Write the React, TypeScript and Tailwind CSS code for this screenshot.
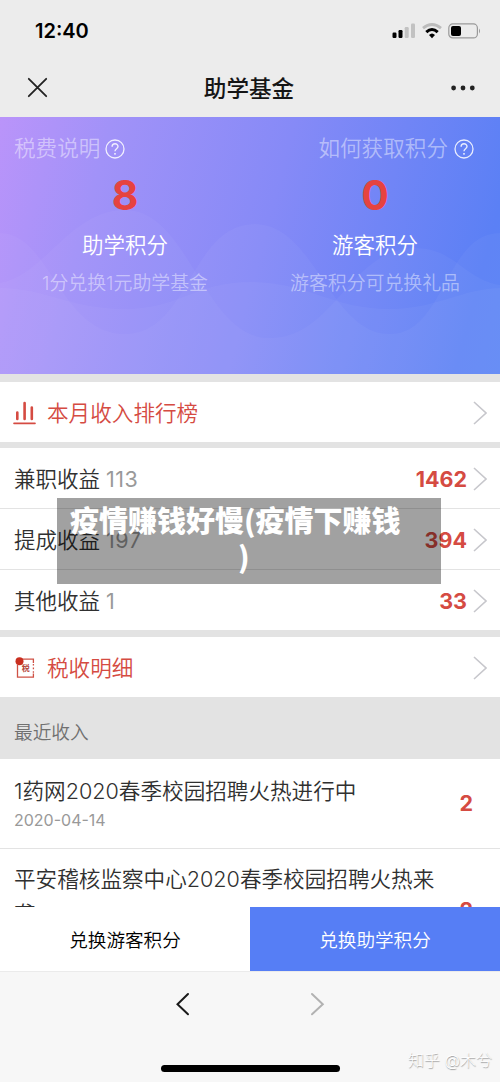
import type { ReactNode } from "react"

const incomes = [
  { label: "兼职收益", count: 113, total: 1462 },
  { label: "提成收益", count: 197, total: 394 },
  { label: "其他收益", count: 1, total: 33 },
]

function Chevron() {
  return (
    <svg className="w-[14px] h-6 shrink-0" viewBox="0 0 14 24" fill="none" stroke="#c7c7cc" strokeWidth="1.6">
      <path d="M1 1 L13 12 L1 23" />
    </svg>
  )
}

function HelpIcon() {
  return (
    <svg className="w-5 h-5 mt-[2px]" viewBox="0 0 20 20" fill="none" stroke="#fff" strokeOpacity="0.85">
      <circle cx="10" cy="10" r="9" strokeWidth="1.3" />
      <path d="M7.1 7.8 C7.1 3.8 13 3.9 13 7.6 C13 9.7 10 9.9 10 12.3" strokeWidth="1.4" />
      <circle cx="10" cy="14.8" r="0.9" fill="#fff" stroke="none" />
    </svg>
  )
}

function StatusBar() {
  return (
    <div className="h-[60px] flex items-center justify-between pl-[35px] pr-[19px]">
      <span className="text-[20px] leading-6 font-semibold text-black mt-0.5">12:40</span>
      <div className="flex items-center gap-[6px] mt-[1px]">
        <svg className="w-6 h-4" viewBox="0 0 24 16">
          <rect x="0.5" y="9.5" width="4" height="5.5" rx="1.2" />
          <rect x="6.5" y="7" width="4" height="8" rx="1.2" />
          <rect x="12.7" y="4" width="4" height="11" rx="1.2" fill="#c2c2c2" />
          <rect x="19" y="0.5" width="4" height="14.5" rx="1.2" fill="#c2c2c2" />
        </svg>
        <svg className="w-5 h-4" viewBox="0 0 20 16" fill="none">
          <path d="M1 5.2 Q10 -2.2 19 5.2" stroke="#bcbcbc" strokeWidth="2.8" />
          <path d="M4.3 9.2 Q10 3.8 15.7 9.2" stroke="#000" strokeWidth="3" />
          <path d="M7 12 Q10 9 13 12 L10 15.2 Z" fill="#000" />
        </svg>
        <svg className="w-[33px] h-4" viewBox="0 0 33 16" fill="none">
          <rect x="0.8" y="0.9" width="28.6" height="14" rx="4" stroke="#999" strokeWidth="1.2" />
          <rect x="3" y="3" width="10" height="10" rx="2" fill="#000" />
          <path d="M31 5.5 Q33 8 31 10.5 Z" fill="#999" />
        </svg>
      </div>
    </div>
  )
}

function NavBar() {
  return (
    <div className="h-[57px] flex items-center justify-between pl-[27px] pr-[25px]">
      <svg className="w-[21px] h-[21px] -mt-0.5" viewBox="0 0 21 21" stroke="#222" strokeWidth="1.8" strokeLinecap="round">
        <path d="M1.8 1.8 L19.2 19.2 M19.2 1.8 L1.8 19.2" />
      </svg>
      <h1 className="text-[22.6px] leading-7 font-medium text-[#151515] -ml-[1px]">助学基金</h1>
      <svg className="w-6 h-[6px] -mt-0.5" viewBox="0 0 24 6" fill="#222">
        <circle cx="2.6" cy="3" r="2.4" />
        <circle cx="12" cy="3" r="2.4" />
        <circle cx="21.3" cy="3" r="2.4" />
      </svg>
    </div>
  )
}

function Waves() {
  return (
    <svg className="absolute inset-0 w-full h-full" viewBox="0 0 500 257" fill="#fff" fillOpacity="0.035">
      <path d="M0 166 C45 158 70 93 125 93 C190 93 203 221 270 221 C335 221 350 131 415 131 C455 131 465 163 500 168 V257 H0 Z" />
      <path d="M0 116 C50 116 60 217 125 217 C190 217 190 107 255 107 C315 107 330 217 390 217 C445 217 445 116 500 116 V257 H0 Z" />
      <path d="M0 171 C45 171 70 192 125 192 C180 192 195 165 250 165 C310 165 330 192 390 192 C435 192 465 171 500 171 V257 H0 Z" />
    </svg>
  )
}

function PointCard({ value, name, hint }: { value: number; name: string; hint: string }) {
  return (
    <div className="flex-1 flex flex-col items-center">
      <span className="text-[41px] leading-[48px] font-bold text-[#e64340]">{value}</span>
      <span className="mt-[10px] text-[21.5px] leading-8 font-[350] text-white">{name}</span>
      <span className="mt-[9px] text-[18.9px] leading-7 font-[350] text-white/45">{hint}</span>
    </div>
  )
}

function Banner() {
  return (
    <section className="relative h-[257px] bg-[linear-gradient(105deg,#ba94fa_0%,#a192f8_20%,#868af7_52%,#5b80f5_92%,#5982f5_100%)]">
      <Waves />
      <div className="relative flex justify-between pl-[14px] pr-[26px] pt-[15px] text-[21.6px] leading-8 font-[350] text-white/45">
        <div className="flex items-center gap-[5px]">
          税费说明
          <HelpIcon />
        </div>
        <div className="flex items-center gap-[6px]">
          如何获取积分
          <HelpIcon />
        </div>
      </div>
      <div className="relative flex mt-[7px]">
        <PointCard value={8} name="助学积分" hint="1分兑换1元助学基金" />
        <PointCard value={0} name="游客积分" hint="游客积分可兑换礼品" />
      </div>
    </section>
  )
}

function LinkRow({ icon, children }: { icon: ReactNode; children: ReactNode }) {
  return (
    <div className="h-[60px] bg-white flex items-center pt-0.5 pl-[13px] pr-[13px]">
      {icon}
      <span className="ml-[11px] flex-1 text-[21.6px] leading-8 font-[350] text-[#d54b42]">{children}</span>
      <Chevron />
    </div>
  )
}

function ChartIcon() {
  return (
    <svg className="w-[23px] h-6" viewBox="0 0 23 24" stroke="#d54b42" strokeWidth="2.6" strokeLinecap="round">
      <path d="M4.3 11.5 V18 M11.6 2 V18 M18.8 6.5 V18" />
      <path d="M1 22.4 H22" strokeWidth="1.6" />
    </svg>
  )
}

function TaxIcon() {
  return (
    <svg className="w-[23px] h-6" viewBox="0 0 23 24" fill="none" stroke="#cf5145" strokeWidth="1.3">
      <path d="M9 3.2 H20.4 V7 M4.5 9 V21.2 H20.4 V17.6" />
      <path d="M20.4 8 V17" strokeDasharray="1.6 2" />
      <circle cx="6.5" cy="5.3" r="4" fill="#c92f20" stroke="none" />
      <text x="8.8" y="15" fontSize="8" fontWeight="700" fill="#b5483c" stroke="none">
        税
      </text>
    </svg>
  )
}

export default function App() {
  return (
    <main className="relative w-[500px] h-[1082px] overflow-hidden flex flex-col bg-white text-[#303030] font-['Inter','Noto_Sans_CJK_SC',sans-serif]">
      <header className="bg-[#ececec] shrink-0">
        <StatusBar />
        <NavBar />
      </header>

      <div className="h-[790px] shrink-0 overflow-hidden bg-[#e3e3e3]">
        <Banner />
        <div className="mt-2">
          <LinkRow icon={<ChartIcon />}>本月收入排行榜</LinkRow>
        </div>

        {/* Income totals */}
        <div className="mt-1.5 bg-white">
          {incomes.map((item) => (
            <div
              key={item.label}
              className="h-[61px] flex items-center pt-0.5 pl-[14px] pr-[13px] border-b border-[#e3e3e3] text-[21.5px] leading-8"
            >
              <span className="font-[350]">{item.label}</span>
              <span className="ml-[6px] tracking-[0.5px] text-[#999]">{item.count}</span>
              <span className="ml-auto mr-[6px] font-bold text-[#d54b42]">{item.total}</span>
              <Chevron />
            </div>
          ))}
        </div>

        <div className="mt-1.5">
          <LinkRow icon={<TaxIcon />}>税收明细</LinkRow>
        </div>

        <h2 className="h-[62px] pt-[10px] pl-[14px] flex items-center text-[18.7px] font-[350] text-[#707070]">最近收入</h2>

        {/* Recent income */}
        <div className="bg-white">
          <div className="h-[90px] flex items-center justify-between pl-[14px] pr-[27px] border-b border-[#e3e3e3]">
            <div className="-mt-0.5">
              <p className="text-[21.6px] leading-[34px] font-[350]">1药网2020春季校园招聘火热进行中</p>
              <p className="text-[16px] leading-6 text-[#999]">2020-04-14</p>
            </div>
            <span className="text-[21.5px] font-bold text-[#d54b42]">2</span>
          </div>
          <div className="h-[122px] flex items-center justify-between pl-[14px] pr-[27px]">
            <div className="w-[430px]">
              <p className="text-[21.6px] leading-[35px] -mt-0.5 font-[350]">平安稽核监察中心2020春季校园招聘火热来袭</p>
              <p className="text-[16px] leading-6 text-[#999]">2020-04-14</p>
            </div>
            <span className="text-[21.5px] font-bold text-[#d54b42]">2</span>
          </div>
        </div>
      </div>

      <div className="h-16 shrink-0 flex text-[18.6px] font-[350]">
        <button className="flex-1 pt-1 bg-white text-black">兑换游客积分</button>
        <button className="flex-1 pt-1 bg-[#567ef5] text-white">兑换助学积分</button>
      </div>

      <footer className="flex-1 bg-[#f7f7f7] border-t border-[#ebebeb] flex flex-col items-center">
        <div className="flex gap-[120px] mt-5">
          <svg className="w-[15px] h-6" viewBox="0 0 15 24" fill="none" stroke="#1a1a1a" strokeWidth="2" strokeLinecap="round">
            <path d="M13 2 L2.5 12.3 L13 22.3" />
          </svg>
          <svg className="w-[15px] h-6" viewBox="0 0 15 24" fill="none" stroke="#b2b2b2" strokeWidth="2" strokeLinecap="round">
            <path d="M2 2 L12.8 12.3 L2 22.3" />
          </svg>
        </div>
        <div className="mt-[49px] w-[179px] h-[7px] rounded-full bg-black" />
      </footer>

      {/* Caption */}
      <div className="absolute left-[57px] top-[498px] w-[384px] h-[86px] pt-[3px] px-[13px] bg-black/37 text-left text-[29px] leading-9 font-black text-white font-['Noto_Sans_CJK_SC',sans-serif]">
        <p className="whitespace-nowrap">疫情赚钱好慢(疫情下赚钱</p>
        <p className="ml-[168px]">)</p>
      </div>

      {/* Watermark */}
      <span className="absolute left-[408px] top-[1048px] whitespace-nowrap text-[16px] leading-6 font-light text-white [text-shadow:0.5px_1px_1px_#999]">
        知乎 @木兮
      </span>
    </main>
  )
}
